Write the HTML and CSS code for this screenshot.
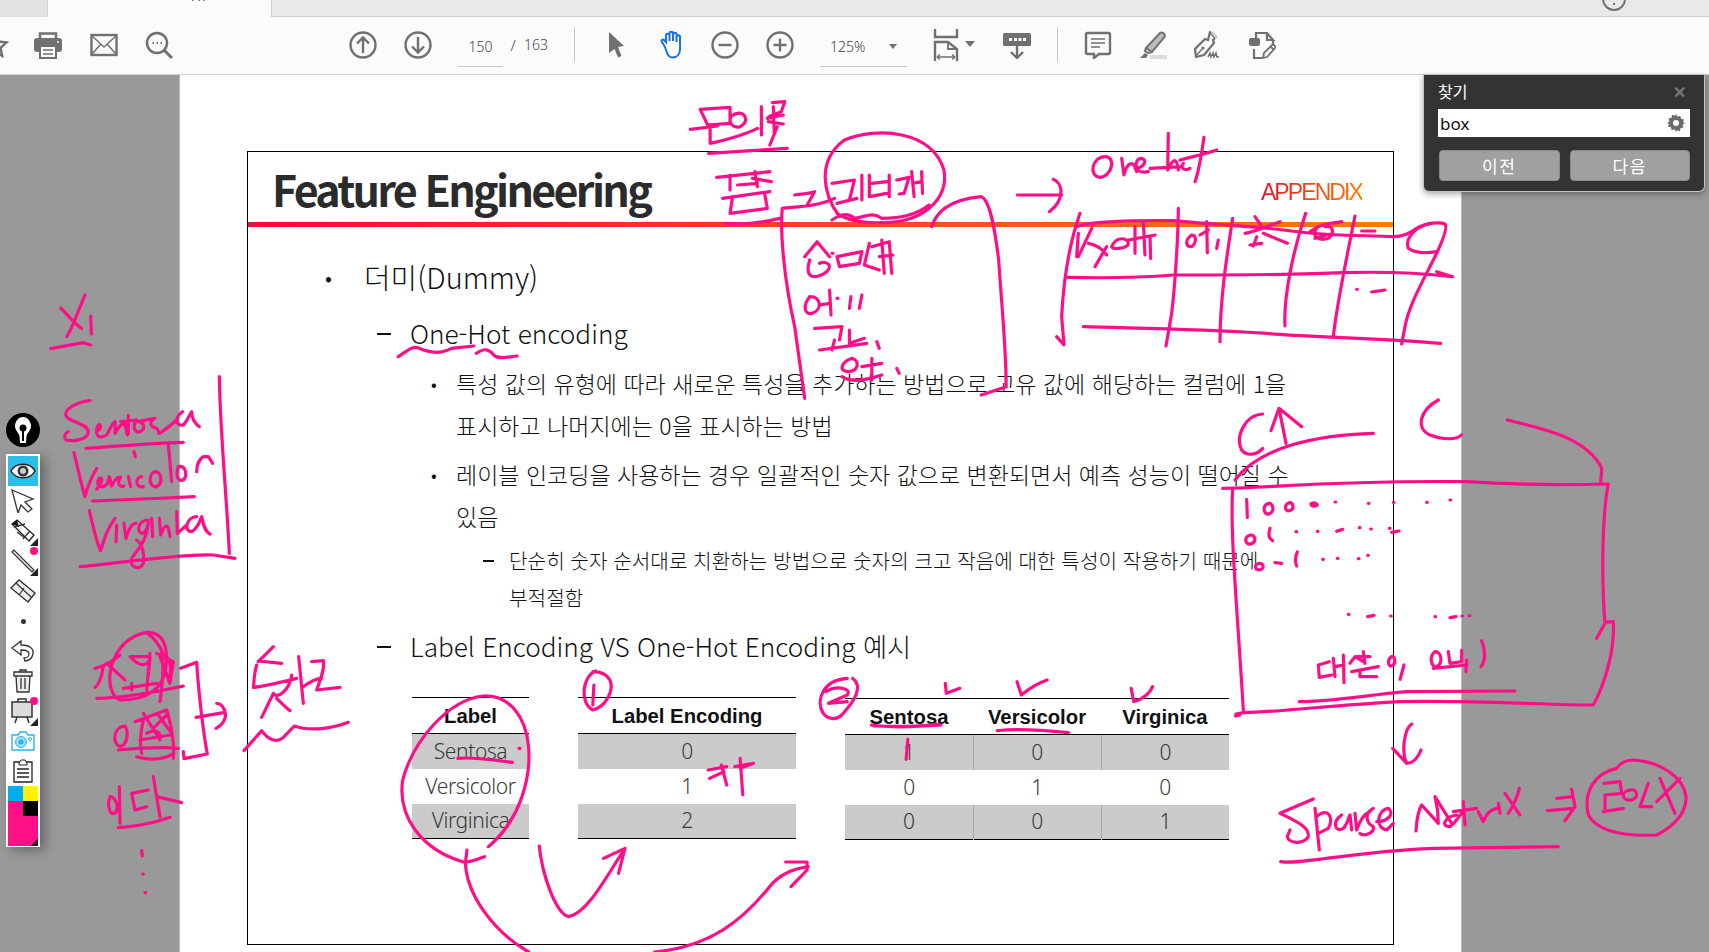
FILE: index.html
```html
<!DOCTYPE html>
<html lang="ko">
<head>
<meta charset="utf-8">
<title>Feature Engineering</title>
<link rel="stylesheet" href="styles.css">
</head>
<body>
<div class="app">
  <div class="tabstrip">
    <div class="tab-prev"></div>
    <div class="tab-active"><span class="tab-text">Power BIM 보 매뉴...</span></div>
    <div class="strip-right">
      <svg class="help-ico" width="26" height="16" viewBox="0 0 26 16"><circle cx="13" cy="-1" r="11" fill="none" stroke="#707070" stroke-width="2"/><path d="M13 3v2" stroke="#707070" stroke-width="2"/></svg>
      <span class="login-text">로그인</span>
    </div>
  </div>

  <div class="toolbar">
    <svg class="ic star" width="9" height="28" viewBox="19 0 9 28"><path d="M14 3l3.4 7.5 8.1.9-6 5.4 1.7 8-7.2-4.1-7.2 4.1 1.7-8-6-5.4 8.1-.9z" fill="none" stroke="#707070" stroke-width="2.4"/></svg>
    <svg class="ic m25" viewBox="0 0 28 28"><path d="M6 8V2.500h16V8" fill="none" stroke="#707070" stroke-width="2.500"/><rect y="7" width="28" height="14" rx="3" fill="#707070"/><rect x="6" y="15" width="16" height="12" fill="#fbfbfb" stroke="#707070" stroke-width="2"/><path d="M9 19h10M9 23h10" stroke="#707070" stroke-width="1.500"/><circle cx="24" cy="11" r="1" fill="#fbfbfb"/></svg>
    <svg class="ic m28" viewBox="0 0 28 28"><rect x="1.500" y="4" width="25" height="20" fill="none" stroke="#707070" stroke-width="2.400"/><path d="M2 5l12 11L26 5M2 23l9-10M26 23l-9-10" fill="none" stroke="#707070" stroke-width="1.500"/></svg>
    <svg class="ic m27" viewBox="0 0 28 28"><circle cx="12" cy="12" r="10" fill="none" stroke="#707070" stroke-width="2.500"/><path d="M19 19l8 8" stroke="#707070" stroke-width="3"/><path d="M7.500 12h1.500M11.500 12h1.500M15.500 12h1.500" stroke="#707070" stroke-width="2"/></svg>
    <svg class="ic m176" viewBox="0 0 28 28"><circle cx="14" cy="14" r="12.500" fill="none" stroke="#707070" stroke-width="2.400"/><path d="M14 22V7M8 12.500L14 6.500l6 6" fill="none" stroke="#707070" stroke-width="2.400"/></svg>
    <svg class="ic m27" viewBox="0 0 28 28"><circle cx="14" cy="14" r="12.500" fill="none" stroke="#707070" stroke-width="2.400"/><path d="M14 6v15M8 15.500l6 6 6-6" fill="none" stroke="#707070" stroke-width="2.400"/></svg>
    <div class="field page-field m26">150</div>
    <span class="pg-sep">/</span>
    <span class="pg-total">163</span>
    <div class="tb-sep m25"></div>
    <svg class="ic m27" viewBox="0 0 28 28"><path d="M7 1l15 14-6 1 3.500 9-3.500 1.500L12.500 18 7 22z" fill="#707070"/></svg>
    <svg class="ic m28" viewBox="0 0 28 28"><path d="M7 16L4 11c-1.500-2 1-3.500 2.500-1.500L8 11V4.500c0-2.500 3.500-2.500 3.500 0V10V2.500c0-2.500 3.500-2.500 3.500 0V10V3.500c0-2.500 3.500-2.500 3.500 0V11V6c0-2.500 3.500-2.500 3.500 0v12c0 5-3 8.500-7.500 8.500S9.500 23 7 16z" fill="none" stroke="#1473e6" stroke-width="2"/></svg>
    <svg class="ic m25" viewBox="0 0 28 28"><circle cx="14" cy="14" r="12.500" fill="none" stroke="#707070" stroke-width="2.400"/><path d="M7.500 14h13" stroke="#707070" stroke-width="2.400"/></svg>
    <svg class="ic m27" viewBox="0 0 28 28"><circle cx="14" cy="14" r="12.500" fill="none" stroke="#707070" stroke-width="2.400"/><path d="M7.500 14h13M14 7.500v13" stroke="#707070" stroke-width="2.400"/></svg>
    <div class="field zoom-field m26"><span>125%</span><span class="caret"></span></div>
    <svg class="ic tall m25" viewBox="0 0 28 32"><path d="M3 0v8h22V0" fill="none" stroke="#707070" stroke-width="2.400"/><path d="M3 32V13h13l9 7v12" fill="none" stroke="#707070" stroke-width="2.400"/><path d="M16 13v7h9" fill="none" stroke="#707070" stroke-width="1.800"/><path d="M5 28h18M5 28l3-2.500M5 28l3 2.500M23 28l-3-2.500M23 28l-3 2.500" fill="none" stroke="#707070" stroke-width="1.500"/></svg>
    <span class="caret m5 caret-solo"></span>
    <svg class="ic m28" viewBox="0 0 28 28"><rect y="2" width="28" height="13" rx="1.500" fill="#707070"/><path d="M6 8.500h3M11 8.500h3M15.500 8.500h3M20 8.500h3" stroke="#fbfbfb" stroke-width="3" stroke-dasharray="3 1"/><path d="M14 15v12M8 21l6 6 6-6" fill="none" stroke="#707070" stroke-width="2.400"/></svg>
    <div class="tb-sep m26"></div>
    <svg class="ic m26" viewBox="0 0 28 28"><path d="M2 3.500C2 2.500 2.500 2 3.500 2h21c1 0 1.500.5 1.500 1.500v18c0 1-.5 1.500-1.500 1.500H15l-5 4v-4H3.500C2.500 23 2 22.500 2 21.500z" fill="none" stroke="#707070" stroke-width="2.400"/><path d="M7 8h14M7 12h14M7 16h9" stroke="#707070" stroke-width="1.500"/></svg>
    <svg class="ic m27" viewBox="0 0 28 28"><path d="M7 17L21 2c2-1.500 6 1 4.500 4L13 21z" fill="#bdbdbd" stroke="#707070" stroke-width="2"/><path d="M7 17l-1 3 3 2 4-1" fill="none" stroke="#707070" stroke-width="2"/><path d="M1 27l5-5 3 2-2 3z" fill="#707070"/><rect x="11" y="24" width="17" height="4" fill="#dcdcdc"/></svg>
    <svg class="ic m26" viewBox="0 0 28 28"><path d="M17 1l5 6-2 2 1 3-10 12-8 2-1-8L12 8l3 1z" fill="none" stroke="#707070" stroke-width="2.200"/><path d="M3 25l6-7" stroke="#707070" stroke-width="1.500"/><circle cx="10" cy="17" r="1.600" fill="#707070"/><path d="M19 1l5 6" stroke="#cfcfcf" stroke-width="3"/><path d="M15 26l2-4 1 4 2-4 1 4 2-4 1 4h2" fill="none" stroke="#707070" stroke-width="1.500"/></svg>
    <svg class="ic m27" viewBox="0 0 28 28"><path d="M8 7V2h11l6 7h-6V2M25 9v4" fill="none" stroke="#707070" stroke-width="2.200"/><rect x="1" y="7" width="11" height="8" rx="2" fill="#707070"/><path d="M6 18v9h8" fill="none" stroke="#707070" stroke-width="2.200"/><path d="M15 27l1-5 9-9 3 3-9 10zM22.500 15.500l3 3" fill="none" stroke="#707070" stroke-width="1.800"/></svg>
  </div>

  <div class="viewer">
    <div class="page">
      <div class="slide">
        <div class="slide-head">
          <h1 class="slide-title">Feature Engineering</h1>
          <div class="appendix">APPENDIX</div>
        </div>
        <div class="rule"></div>
        <div class="slide-body">
          <div class="l1"><span class="bul">•</span>더미(Dummy)</div>
          <div class="l2 l2-a"><span class="dash"></span>One-Hot encoding</div>
          <div class="l3 l3-a"><span class="bul">•</span>특성 값의 유형에 따라 새로운 특성을 추가하는 방법으로 고유 값에 해당하는 컬럼에 1을<br>표시하고 나머지에는 0을 표시하는 방법</div>
          <div class="l3 l3-b"><span class="bul">•</span>레이블 인코딩을 사용하는 경우 일괄적인 숫자 값으로 변환되면서 예측 성능이 떨어질 수<br>있음</div>
          <div class="l4"><span class="dash dash-s"></span>단순히 숫자 순서대로 치환하는 방법으로 숫자의 크고 작음에 대한 특성이 작용하기 때문에<br>부적절함</div>
          <div class="l2 l2-b"><span class="dash"></span>Label Encoding VS One-Hot Encoding 예시</div>
          <div class="tables">
            <table class="tb tb1">
              <tr><th>Label</th></tr>
              <tr class="gray"><td>Sentosa</td></tr>
              <tr><td>Versicolor</td></tr>
              <tr class="gray"><td>Virginica</td></tr>
            </table>
            <table class="tb tb2">
              <tr><th>Label Encoding</th></tr>
              <tr class="gray"><td>0</td></tr>
              <tr><td>1</td></tr>
              <tr class="gray"><td>2</td></tr>
            </table>
            <table class="tb tb3">
              <tr><th>Sentosa</th><th>Versicolor</th><th>Virginica</th></tr>
              <tr class="gray"><td>1</td><td>0</td><td>0</td></tr>
              <tr><td>0</td><td>1</td><td>0</td></tr>
              <tr class="gray"><td>0</td><td>0</td><td>1</td></tr>
            </table>
          </div>
        </div>
      </div>
    </div>
  </div>
</div>

<div class="pen-logo"><svg width="34" height="34" viewBox="0 0 34 34"><circle cx="17" cy="17" r="17" fill="#000"/><path d="M17 4c-5 0-8 5-8 9 0 4 3 6 4.500 10l.5 7h6l.5-7c1.500-4 4.500-6 4.500-10 0-4-3-9-8-9z" fill="#fff"/><circle cx="17" cy="15" r="3.500" fill="#000"/><path d="M17 15v13" stroke="#000" stroke-width="2"/></svg></div>

<div class="palette">
  <div class="pal-btn pal-on"><svg width="26" height="16" viewBox="0 0 26 16"><path d="M1 8c5-9 19-9 24 0-5 9-19 9-24 0z" fill="#fff" stroke="#222" stroke-width="1.500"/><circle cx="13" cy="8" r="5.500" fill="#333"/><circle cx="13" cy="8" r="3" fill="#ccc"/></svg></div>
  <div class="pal-btn"><svg width="24" height="24" viewBox="0 0 24 24"><path d="M1 1l21 9-8 3 7 7-4 3-7-7-3 8z" fill="#fff" stroke="#333" stroke-width="1.300"/></svg></div>
  <div class="pal-btn pal-more"><svg width="24" height="24" viewBox="0 0 24 24"><path d="M1 5l5-4 17 15-5 6z" fill="#fff" stroke="#222" stroke-width="1.300"/><path d="M1 5l5-4 2 7z" fill="#111"/><path d="M3 8l11-3M12 20l7-8M6 13l8 6" stroke="#333" stroke-width="1.300" fill="none"/></svg></div>
  <div class="pal-btn pal-more"><svg width="24" height="24" viewBox="0 0 24 24"><path d="M1 3l2-2 20 20-2 2z" fill="#e4e4e4" stroke="#333" stroke-width="1.200"/></svg><span class="pal-dot"></span></div>
  <div class="pal-btn"><svg width="26" height="24" viewBox="0 0 26 24"><path d="M1 9l8-8 16 13-7 9z" fill="#eee" stroke="#333" stroke-width="1.400"/><path d="M6 4l15 14M9 16l5-7" stroke="#333" stroke-width="1.200" fill="none"/></svg></div>
  <div class="pal-btn"><span class="tiny-dot"></span></div>
  <div class="pal-btn"><svg width="24" height="22" viewBox="0 0 24 22"><path d="M1 8l9-7v4c8 0 13 3 12 9-1 5-5 7-8 7l-1-3c3 0 5-2 5-4 0-3-4-4-8-4v5z" fill="#fff" stroke="#333" stroke-width="1.300"/></svg></div>
  <div class="pal-btn"><svg width="20" height="24" viewBox="0 0 20 24"><path d="M7 3V1h6v2M1 3h18v4H1zM3 7l1 16h12l1-16" fill="#eee" stroke="#333" stroke-width="1.300"/><path d="M8 9v11M12 9v11" stroke="#333" stroke-width="1.300"/></svg></div>
  <div class="pal-btn pal-more"><svg width="24" height="26" viewBox="0 0 24 26"><rect x="1" y="4" width="20" height="15" fill="#ddd" stroke="#333" stroke-width="1.500"/><path d="M7 4V1h8v3M6 19l-2 6M16 19l2 6" stroke="#333" stroke-width="1.500" fill="none"/></svg><span class="pal-dot"></span></div>
  <div class="pal-btn"><svg width="24" height="20" viewBox="0 0 24 20"><path d="M1 4h6l2-3h6l2 3h6v15H1z" fill="#fff" stroke="#2cb7e6" stroke-width="1.400"/><circle cx="10" cy="11" r="5.500" fill="#9bdcf3" stroke="#2cb7e6"/><circle cx="10" cy="11" r="2.500" fill="#2cb7e6"/><circle cx="19" cy="8" r="1.500" fill="none" stroke="#2cb7e6"/></svg></div>
  <div class="pal-btn"><svg width="20" height="24" viewBox="0 0 20 24"><path d="M1 3h18v20H1z" fill="#fff" stroke="#222" stroke-width="1.300"/><path d="M6 4l2-3h4l2 3v2H6z" fill="#fff" stroke="#222"/><path d="M4 10h12M4 14h12M4 18h12" stroke="#222" stroke-width="1.300"/></svg></div>
  <div class="swatches">
    <span class="sw sw-c"></span><span class="sw sw-y"></span>
    <span class="sw sw-m"></span><span class="sw sw-k"></span>
    <span class="sw-big"></span>
  </div>
</div>

<div class="find">
  <div class="find-head"><span>찾기</span><span class="find-x">✕</span></div>
  <div class="find-input"><span>box</span><svg width="18" height="18" viewBox="0 0 18 18"><path d="M9 0l1.500 2.800 2.800-1 .7 3 3 .7-1 2.800L18 9l-2.500 1.700 1 2.800-3 .7-.7 3-2.800-1L9 18l-1.500-2.800-2.800 1-.7-3-3-.7 1-2.800L0 9l2.500-1.700-1-2.800 3-.7.700-3 2.800 1z" fill="#6a6a6a"/><circle cx="9" cy="9" r="3" fill="#fff"/></svg></div>
  <div class="find-btns"><button class="find-btn">이전</button><button class="find-btn">다음</button></div>
</div>

<svg class="ink" width="1709" height="952" viewBox="0 0 1709 952">
  <g transform="translate(0 280) scale(.33333)">
    <path d="M182 84C200 100 225 135 245 145M255 45C235 90 215 150 200 170M272 108L274 162M152 206Q210 195 250 188L272 195"/>
    <path d="M270 362C235 365 195 385 197 405C200 425 265 430 265 455C265 480 215 485 198 480C190 470 195 460 205 455"/>
    <path d="M290 455C310 440 300 425 292 440C285 465 295 480 320 465C330 450 335 430 345 425L345 460C355 440 365 430 375 432L382 465M385 405L385 462M362 425L410 420C395 440 405 460 420 455C440 445 430 425 415 425C440 420 455 415 465 415C445 425 450 440 470 445C480 455 470 460 480 460C500 445 520 430 530 420M548 395C525 410 525 440 550 435C565 420 570 400 575 395C575 415 585 430 598 440"/>
    <path d="M258 505C330 500 450 490 550 487"/>
    <path d="M222 518C235 570 245 620 255 650C265 610 275 590 290 565"/>
    <path d="M290 628C305 610 312 590 298 595C285 610 300 632 322 612L328 590L335 618C345 600 350 590 362 592C348 610 362 625 372 618M385 590L392 620M402 515L406 530M425 590C405 590 405 625 430 620M465 575C445 580 445 625 470 620C490 610 485 575 465 575M505 490C508 530 512 570 515 605M535 560C525 590 535 605 550 600C565 585 555 555 535 560M590 575C590 555 595 540 610 530L625 530L638 550"/>
    <path d="M278 663C350 660 480 655 583 650"/>
    <path d="M268 692C280 740 290 790 302 812C315 770 320 750 345 715M350 735L348 785M372 730L378 775C385 750 395 730 408 730M445 720C415 720 405 760 430 760C440 750 445 735 445 725C440 790 410 810 395 835C385 860 420 875 430 850C435 820 425 790 410 780M455 715L458 770M478 715L482 765C495 730 505 725 510 770M530 695L532 760L560 735M590 710C560 710 550 755 575 755C595 745 600 720 605 710C610 735 615 755 630 762"/>
    <path d="M240 860C350 850 550 820 640 825L705 835M658 290C660 450 680 650 688 820"/>
  </g>
  <g transform="translate(60 600) scale(.33333)">
    <path d="M155 270C135 220 165 115 260 97C310 95 325 140 318 200C310 270 260 300 180 300C165 295 160 285 155 270M262 100C285 115 300 135 310 165"/>
    <path d="M105 205C130 200 150 190 180 165M130 200C125 230 115 255 105 262M140 190L195 240M210 170L270 170M215 175C235 195 260 205 270 175L265 225M270 160L260 270M305 155C315 205 305 265 300 305M290 160L340 185L330 250L300 170M110 295C190 295 290 275 370 258M215 250L215 270M190 265L290 250M320 170C335 190 335 220 325 240"/>
    <path d="M195 378C160 380 155 430 180 440C205 435 205 390 195 378M250 360C240 400 240 440 245 460M225 365L320 330C330 360 345 430 340 475M250 340L300 420M280 385L320 345M260 400C285 385 305 395 300 420M175 450C230 445 300 440 355 445M230 470C280 485 320 475 340 460M295 345L335 400M240 420L330 405"/>
    <path d="M150 590C140 620 150 645 165 640C180 620 165 590 150 590M178 560L180 670M215 580L265 570M215 580L225 630L260 620M280 530L300 650M290 590L365 608M175 683C220 680 280 670 330 652"/>
    <path d="M245 752L247 768M248 822h2M255 878h2"/>
    <path d="M362 205L410 187C415 270 430 400 442 462L372 476L370 455M408 352L490 338M470 310C490 310 500 340 495 355C490 370 478 380 468 385"/>
    <path d="M640 140L595 185M595 183L665 190M590 195C580 230 582 260 580 262C610 260 690 240 710 235M640 280L605 352M650 295C660 305 680 325 690 332M695 225C690 270 650 300 640 280M716 170L730 310M730 260C750 245 770 235 785 235M755 185L790 182C795 210 780 240 770 270L840 262"/>
    <path d="M552 452L605 392C625 420 650 430 670 412L703 378C750 395 820 385 865 367"/>
  </g>
  <g transform="translate(240 100) scale(.4975 .33333)">
    <path d="M925 28L985 22L985 70L940 75L925 28M905 88L960 78M945 78L945 130C980 120 1020 100 1040 85M1000 40C975 45 985 90 1005 80C1025 65 1015 35 1000 40M1048 20L1048 105M1072 20L1074 100M1060 55L1092 45M1070 8L1095 5L1088 35C1075 45 1065 45 1060 55M1062 65L1092 72M1080 80L1065 135M942 160C990 155 1050 150 1100 145"/>
    <path d="M958 232L1065 215M985 225L985 270M1035 215L1040 260M970 295L1065 275M990 290L985 340L1060 325L1055 285M1030 235L1068 245M1000 255L1040 250M975 370C1010 375 1050 368 1085 355"/>
    <path d="M1115 285C1130 282 1145 280 1155 275L1140 315M1090 325C1120 320 1160 320 1195 295M1090 325C1085 400 1095 550 1115 680L1135 895"/>
    <path d="M1390 380C1400 340 1420 300 1490 290C1510 300 1520 420 1525 480C1530 600 1540 740 1540 860L1490 885"/>
    <path d="M1205 350C1170 280 1160 180 1215 120C1280 80 1390 90 1415 210C1425 300 1370 370 1290 368C1250 370 1220 360 1200 340"/>
    <path d="M1190 250L1235 240L1225 300M1200 310L1240 295M1250 225L1250 300M1265 225L1265 290L1300 280M1270 250L1300 245M1305 225L1305 290M1320 240L1345 232L1335 280L1325 282M1350 215L1355 290M1370 215L1372 280M1352 250L1370 245"/>
    <path d="M1190 360C1205 345 1220 335 1235 355C1260 350 1270 335 1290 355C1330 355 1360 345 1385 315"/>
    <path d="M1135 470L1160 425L1185 470M1145 480C1135 530 1150 540 1175 520C1195 500 1180 480 1165 490M1190 460h2M1200 470L1250 455L1245 490L1205 500L1200 470M1265 430L1255 495L1285 510M1270 440L1305 425L1310 520M1285 470L1312 465M1290 420L1295 520"/>
    <path d="M1145 590C1130 620 1135 645 1150 640C1170 630 1170 590 1145 590M1185 570L1188 645M1165 615L1185 610M1200 595h2M1228 590L1225 625M1250 585L1245 625"/>
    <path d="M1155 685L1210 680L1205 720M1225 690L1225 730L1255 715M1165 750L1260 730M1195 720L1190 750"/>
    <path d="M1230 775C1210 785 1200 815 1225 815C1245 810 1245 780 1230 775M1280 725L1285 745M1250 800L1290 790M1270 775L1270 840M1210 830C1230 850 1260 840 1290 825M1320 805L1325 820"/>
    <path d="M318 770C335 755 345 735 360 745C375 755 400 765 425 745L470 738M475 760C490 745 500 745 510 765C520 780 540 770 557 768"/>
  </g>
  <g transform="translate(1000 100) scale(.33333)">
    <path d="M315 170C275 170 265 230 300 232C335 230 350 170 315 170M365 175L372 225C380 190 400 175 410 215M405 205C430 205 445 180 425 175C400 175 400 225 445 215M450 205L545 200M505 100L503 210C520 175 530 170 535 210M550 190C540 200 550 215 570 205M612 112C605 160 595 220 585 245M540 180C580 170 620 160 650 150"/>
    <path d="M52 285L185 285M160 238C190 250 195 300 148 335"/>
    <path d="M240 340C205 440 190 550 185 650L192 735L170 710"/>
    <path d="M232 380C255 365 400 360 520 362C650 375 780 380 850 390C980 410 1100 405 1180 410C1200 410 1225 405 1250 385C1280 368 1320 365 1335 372C1345 385 1320 440 1300 480C1270 540 1225 620 1215 680L1205 732"/>
    <path d="M1290 370C1240 380 1215 420 1225 445C1245 460 1280 460 1310 455"/>
    <path d="M235 400L230 470M275 385L235 470M265 430C290 435 310 450 320 465M320 440L285 500M335 440C350 405 385 415 385 430C385 445 340 450 335 440M405 380L405 460M430 365L435 465M385 420L465 405M450 410L452 475"/>
    <path d="M575 405C555 420 555 440 575 440C590 430 590 405 575 405M600 405L625 390M620 365L622 458M655 420L650 445"/>
    <path d="M735 400C770 395 810 375 840 365M765 350L785 380M750 435L785 430M770 410L760 438M790 400L862 430"/>
    <path d="M930 395C960 370 1000 370 1025 365M950 385C935 405 950 425 985 415C1005 400 1000 375 975 380M945 415L980 405M1085 393L1125 393M1070 568h2M1115 576L1155 570"/>
    <path d="M535 325C535 400 525 560 515 640L498 738M698 355C680 470 660 600 660 725M917 340C880 450 850 590 855 678M1065 348C1040 470 1010 620 1000 708"/>
    <path d="M203 532C320 535 400 535 520 525C700 525 900 525 1030 518C1130 515 1250 518 1358 530L1310 515M250 680C400 685 560 685 800 700C900 712 1100 710 1322 730"/>
  </g>
  <g transform="translate(1200 400) scale(.33333)">
    <path d="M188 42C135 45 105 110 125 150C140 170 170 165 188 145M258 130L237 25L213 92M237 25L305 80M105 240C180 140 350 105 520 100"/>
    <path d="M715 0C660 30 645 85 690 105C730 120 770 120 784 105M922 60C1020 85 1160 110 1205 205L1202 250"/>
    <path d="M68 265C200 265 400 240 800 245C950 255 1100 255 1225 252C1205 350 1205 550 1215 670L1190 715M1215 667L1240 665C1245 750 1215 850 1180 915C1050 915 800 900 600 905C400 915 250 935 130 938L108 942M98 265C90 400 110 600 130 930"/>
    <path d="M140 298L142 352M207 310C185 315 190 345 207 342C225 335 220 310 207 310M268 308C250 315 255 335 268 332C285 328 280 308 268 308M333 312C340 305 350 310 352 315C345 320 335 320 333 312M405 306h2M505 310h2M580 307h2M680 307h2M750 300h2"/>
    <path d="M152 405C130 410 135 435 152 432C172 425 165 405 152 405M210 385C205 400 205 415 218 422M288 395h2M352 394h2M410 394L428 388M478 383h2M512 387h2M568 385h2M575 397L597 393"/>
    <path d="M178 490C160 495 165 510 180 510C195 505 190 490 178 490M225 488L245 490M292 456C285 470 285 485 290 498M368 478h2M412 475h2M475 476h2M503 466h2"/>
    <path d="M445 643h2M503 650L522 646M572 648h2M705 650h2M750 653L768 650M786 648h2M808 647h2"/>
    <path d="M355 795L388 785M355 795L358 832L395 825M400 775L405 830M430 765L432 848M405 800L432 795M450 790L465 770L490 785M455 815L535 800M470 770L510 770M490 755L495 790M480 815L480 830L530 830M575 770C560 780 565 800 575 798C590 790 585 770 575 770M612 795L600 838M705 755C685 770 695 805 710 800C730 790 725 755 705 755M745 755L750 790L785 785L785 750M700 805L800 795M800 780L798 815M845 722C855 750 858 780 843 800"/>
    <path d="M298 905C400 905 500 885 620 875L945 873M635 972C610 990 605 1060 620 1090C640 1090 655 1070 663 1050M578 1045L620 1090"/>
    <path d="M340 1197L240 1240C280 1260 330 1280 325 1310C310 1335 265 1330 262 1310L270 1290M345 1225L358 1350M350 1250C380 1220 405 1250 385 1285L355 1300M425 1245C395 1265 405 1300 430 1285C445 1270 445 1250 450 1245L455 1290M465 1240L470 1290C480 1260 495 1240 510 1235M520 1225C490 1240 500 1270 520 1280C525 1300 490 1310 480 1300M530 1265C565 1265 585 1240 565 1225C530 1230 525 1285 560 1290L580 1270"/>
    <path d="M648 1293C650 1260 655 1230 665 1215L715 1270C715 1240 710 1210 705 1190L755 1270M770 1245C735 1250 720 1280 750 1280C770 1265 775 1250 785 1240M790 1205L795 1275M760 1235L830 1225M835 1235L850 1265C860 1240 870 1230 890 1225M895 1210L900 1240M915 1180L960 1245M958 1165C950 1200 935 1225 925 1240"/>
    <path d="M1042 1232L1120 1225M1070 1195L1120 1190M1115 1168L1125 1220L1095 1262M242 1385C300 1395 450 1355 700 1345L1075 1340"/>
    <path d="M1250 1105C1180 1120 1150 1180 1165 1245C1190 1290 1260 1310 1370 1305C1420 1280 1460 1240 1458 1190C1450 1130 1380 1085 1300 1080C1280 1080 1260 1090 1250 1105"/>
    <path d="M1212 1150L1260 1145L1265 1180L1215 1185L1215 1235M1290 1170C1260 1175 1265 1205 1295 1200C1320 1190 1310 1165 1290 1170M1345 1150L1320 1220L1355 1220M1210 1235L1270 1225M1440 1135L1370 1205M1380 1135L1425 1240"/>
  </g>
  <g transform="translate(400 660) scale(.53562 .33333)">
    <path d="M165 560C225 480 245 350 240 260C235 170 205 105 155 108C90 120 25 240 5 360C-5 470 40 570 120 607C135 605 150 595 158 590"/>
    <path d="M108 295C140 290 170 300 210 307M222 265h2"/>
    <path d="M365 33C340 50 335 130 360 150C385 140 400 90 392 60C385 40 370 35 360 35M362 75L360 135"/>
    <path d="M835 55C790 60 775 120 790 160C800 180 815 180 825 165C850 120 865 80 845 55M795 95C815 75 845 85 835 105L800 130L835 125"/>
    <path d="M575 330L610 320M578 355L605 335M600 315L610 375M625 320L660 310M635 295L640 405M660 310L635 325"/>
    <path d="M1018 70L1020 100L1045 85M1152 65L1160 105C1175 85 1190 70 1208 60M1365 85L1370 125C1385 120 1400 100 1405 80M1560 168L1568 165"/>
    <path d="M880 195C920 205 970 200 1010 195M885 198C920 200 970 200 1005 192M1115 212C1150 205 1200 210 1248 218M948 238L945 298"/>
    <path d="M125 570L122 610C125 700 170 810 240 876M260 558C265 640 290 760 315 770C350 760 385 650 420 565M380 595L420 565L408 640"/>
    <path d="M475 876C580 860 640 780 690 680C710 640 740 625 762 620M720 606L760 606L760 630L730 680"/>
  </g>
</svg>
</body>
</html>
```

FILE: styles.css
```css
* { box-sizing: border-box; }
html, body { margin: 0; padding: 0; width: 1709px; height: 952px; overflow: hidden; }
body { font-family: "Noto Sans CJK KR", "Noto Sans", sans-serif; background: #999; position: relative; }

.app { display: flex; flex-direction: column; height: 952px; }

/* tab strip */
.tabstrip { display: flex; height: 17px; background: #e9e9e9; border-bottom: 1px solid #cfcfcf; flex: none; }
.tab-prev { width: 48px; border-right: 1px solid #cfcfcf; background: #e2e2e2; height: 17px; }
.tab-active { width: 224px; height: 17px; background: #fbfbfb; border-right: 1px solid #cfcfcf; overflow: hidden; text-align: left; padding-left: 36px; }
.tab-text { display: block; font-size: 15px; line-height: 20px; margin-top: -17px; white-space: nowrap; color: #222; }
.strip-right { margin-left: auto; display: flex; height: 16px; overflow: hidden; }
.help-ico { display: block; margin-right: 30px; }
.login-text { display: block; font-size: 15px; line-height: 20px; margin-top: -17px; color: #333; width: 52px; white-space: nowrap; }

/* toolbar */
.toolbar { display: flex; align-items: center; height: 58px; background: #fbfbfb; border-bottom: 1px solid #d0d0d0; flex: none; padding-bottom: 2px; }
.ic { width: 28px; height: 28px; flex: none; display: block; }
.star { width: 9px; }
.tall { height: 32px; }
.m5 { margin-left: 5px; }
.m25 { margin-left: 25px; }
.m26 { margin-left: 26px; }
.m27 { margin-left: 27px; }
.m28 { margin-left: 28px; }
.m176 { margin-left: 176px; }
.field { display: flex; align-items: center; justify-content: center; height: 35px; border-bottom: 1px solid #c6c6c6; font-size: 14px; color: #444; flex: none; margin-top: 9px; padding-bottom: 5px; font-family: "Noto Sans", sans-serif; font-weight: 300; }
.page-field { width: 45px; }
.zoom-field { width: 87px; justify-content: flex-start; padding-left: 10px; }
.zoom-field .caret { margin-left: 24px; }
.pg-sep { width: 10px; margin-left: 5px; font-size: 15px; color: #444; text-align: center; font-family: "Noto Sans", sans-serif; font-weight: 300; }
.pg-total { width: 25px; margin-left: 6px; font-size: 14px; color: #444; font-family: "Noto Sans", sans-serif; font-weight: 300; }
.tb-sep { width: 1px; height: 35px; background: #c6c6c6; flex: none; }
.caret { width: 0; height: 0; border-left: 4px solid transparent; border-right: 4px solid transparent; border-top: 5px solid #707070; flex: none; display: block; }
.caret-solo { margin-top: -2px; width: 10px; border-left-width: 5px; border-right-width: 5px; border-top-width: 6px; }

/* viewer */
.viewer { flex: 1; background: #999; display: flex; min-height: 0; overflow: hidden; }
.page { margin-left: 179px; width: 1283px; background: #fff; padding: 76px 68px 0 68px; height: 900px; border-left: 1px solid #bbb; border-right: 1px solid #bbb; }
.slide { width: 1147px; height: 794px; border: 1px solid #000; margin-left: -1px; flex: none; }
.slide-head { display: flex; align-items: flex-end; justify-content: space-between; height: 70px; padding: 0 31px 9px 24px; }
.slide-title { margin: 0; font-family: "Noto Sans CJK KR", "Noto Sans", sans-serif; font-size: 43px; font-weight: 700; line-height: 50px; letter-spacing: -2.7px; color: #2b2b2b; }
.appendix { font-family: "Liberation Sans", sans-serif; font-size: 23px; line-height: 26px; letter-spacing: -1.9px; background: linear-gradient(90deg, #e8132b, #ff7a00); -webkit-background-clip: text; background-clip: text; color: transparent; margin-bottom: 8px; }
.rule { height: 5px; background: linear-gradient(90deg, #ec0f3a, #ff7a00); }

.slide-body { padding-top: 29px; color: #111; position: relative; font-weight: 300; }
.bul { display: inline-block; }
.l1 { font-size: 28.900px; line-height: 40px; padding-left: 116px; position: relative; }
.l1 .bul { position: absolute; left: 77px; font-size: 22px; }
.l2 { font-size: 26.200px; line-height: 40px; padding-left: 162px; position: relative; }
.l2-a { margin-top: 17px; }
.l2-b { margin-top: 10px; }
.dash { position: absolute; left: 129px; top: 20px; width: 14px; height: 2px; background: #111; }
.l3 { font-size: 23px; line-height: 42px; padding-left: 208px; position: relative; white-space: nowrap; }
.l3 .bul { position: absolute; left: 183px; font-size: 18px; }
.l3-a { margin-top: 9px; }
.l3-b { margin-top: 7px; }
.l4 { font-size: 20.200px; line-height: 37px; padding-left: 261px; position: relative; margin-top: 5px; white-space: nowrap; }
.dash-s { left: 235px; top: 18px; width: 11px; }

.tables { display: flex; align-items: flex-start; gap: 49px; padding-left: 164px; margin-top: 31px; }
.tb { border-collapse: collapse; border-top: 1px solid #000; border-bottom: 1px solid #000; table-layout: fixed; }
.tb1 { width: 117px; }
.tb2 { width: 218px; }
.tb3 { width: 384px; margin-top: 1px; }
.tb th { height: 36px; padding: 1px 0 0; font-family: "Liberation Sans", sans-serif; font-size: 20.300px; font-weight: 700; color: #111; border-bottom: 1px solid #000; }
.tb td { height: 35px; padding: 0 0 1px; text-align: center; font-family: "Noto Sans", sans-serif; font-weight: 300; font-size: 21px; color: #3a3a3a; letter-spacing: -.4px; }
.gray td { background: #cbcbcb; }
.tb3 .gray td + td { border-left: 1px solid #a8a8a8; }

/* pen palette (floating) */
.pen-logo { position: absolute; left: 6px; top: 413px; width: 34px; height: 34px; }
.pen-logo svg { display: block; }
.palette { position: absolute; left: 6px; top: 454px; width: 34px; height: 393px; background: #fff; padding: 2px; box-shadow: 5px 3px 12px rgba(0,0,0,.35); display: flex; flex-direction: column; }
.pal-btn { height: 30px; width: 30px; display: flex; align-items: center; justify-content: center; position: relative; flex: none; }
.pal-on { background: #2dbdea; }
.pal-more::after { content: ""; position: absolute; right: 0; bottom: 0; border-style: solid; border-width: 0 0 8px 8px; border-color: transparent transparent #222 transparent; }
.pal-dot { position: absolute; right: 0; top: 1px; width: 8px; height: 8px; border-radius: 50%; background: #ff0f87; }
.tiny-dot { width: 5px; height: 5px; border-radius: 50%; background: #333; }
.swatches { display: grid; grid-template-columns: 15px 15px; grid-auto-rows: 15px; }
.sw { display: block; }
.sw-c { background: #00aeef; }
.sw-y { background: #fff200; }
.sw-m { background: #ff0f87; }
.sw-k { background: #000; }
.sw-big { grid-column: span 2; grid-row: span 2; background: linear-gradient(135deg, #ff0f87 88%, #222 88%); }

/* find panel (floating) */
.find { position: absolute; left: 1423px; top: 75px; width: 282px; height: 117px; background: #333; border: 1px solid #c4c4c4; border-top: 0; border-radius: 0 0 6px 6px; box-shadow: 0 2px 6px rgba(0,0,0,.35); padding: 0 14px; }
.find-head { display: flex; justify-content: space-between; height: 34px; align-items: center; color: #fff; font-size: 16px; padding-bottom: 3px; }
.find-x { color: #777; font-size: 16px; font-weight: 700; margin-right: 4px; }
.find-input { display: flex; align-items: center; justify-content: space-between; background: #fff; height: 28px; width: 252px; padding: 0 5px 0 2px; font-size: 17px; color: #111; font-family: "Noto Sans", sans-serif; }
.find-btns { display: flex; gap: 10px; margin-top: 13px; padding-left: 1px; }
.find-btn { width: 121px; height: 31px; background: #a0a0a0; border: 1px solid #8a8a8a; border-radius: 4px; color: #fff; font-family: "Noto Sans CJK KR", sans-serif; font-size: 17px; padding: 0; letter-spacing: 1.5px; }

/* annotation ink layer */
.ink { position: absolute; left: 0; top: 0; pointer-events: none; overflow: hidden; }
.ink path { fill: none; stroke: #ff0f87; stroke-width: 3.200px; stroke-linecap: round; stroke-linejoin: round; vector-effect: non-scaling-stroke; }
```
